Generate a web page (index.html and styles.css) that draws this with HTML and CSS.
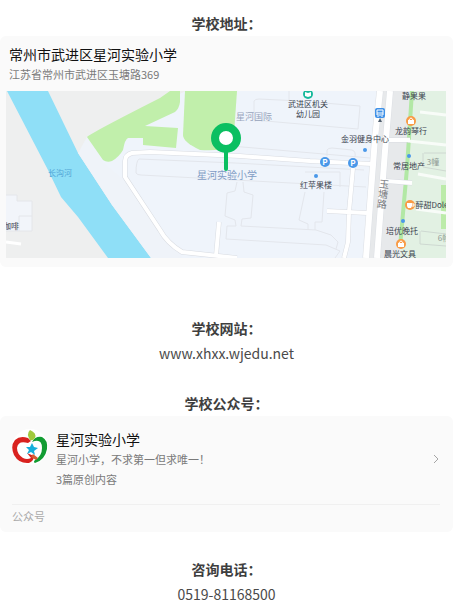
FILE: index.html
```html
<!DOCTYPE html>
<html lang="zh-CN">
<head>
    <meta charset="UTF-8">
    <meta name="viewport" content="width=device-width, initial-scale=1.0">
    <title>常州市武进区星河实验小学</title>
    <link rel="stylesheet" href="styles.css">
</head>
<body>
    <main class="article">
        <section class="address">
            <h2>学校地址：</h2>
            <div class="card location">
                <h3>常州市武进区星河实验小学</h3>
                <p>江苏省常州市武进区玉塘路369</p>
                <svg class="map" viewBox="0 0 440 167" role="img" aria-label="学校地图">
                    <rect width="440" height="167" fill="#eff4fb"/>
                    <!-- west bank and river -->
                    <path d="M0 0H90L80 46L145 167H0Z" fill="#eeefef"/>
                    <path d="M42 0H180L81 46L75 61Z" fill="#eeefef"/>
                    <path d="M1 0H42L72 62L106 114L145 167H102L72 126L55 106L42 79Z" fill="#8fdff7"/>
                    <path d="M72 62L81 46L97 72L119 90L176 167H145L106 114Z" fill="#eff3f9"/>
                    <path d="M0 104H11V110H26V140H0" fill="#f2f5fa" stroke="#e4e6ea"/>
                    <path d="M26 125H13V140" fill="none" stroke="#e4e6ea"/>
                    <path d="M0 151L15 153" stroke="#fff" stroke-width="3"/>
                    <!-- parks -->
                    <path d="M81 46Q83 43 154 7L164 0H174V11Q173 18 169 21L139 35L172 37L170 57L137 54V47H122Q119 48 117 59Q113 66 106 70Q101 72 97 69Z" fill="#c1efab"/>
                    <path d="M179 0H231L227 57Q212 60 194 59Q177 51 177 44Z" fill="#c1efab"/>
                    <!-- buildings -->
                    <g fill="none" stroke="#e3e6ec">
                        <path d="M225 55L364 67M133 68L229 72L358 79M133 68Q130 70 130 82Q131 84 135 84L360 96"/>
                        <path d="M248 29V10Q249 8 253 8L294 10M248 29L352 38L354 15L306 11M283 0V10"/>
                        <path d="M321 65V59Q322 57 326 57L346 59Q350 60 349 66"/>
                        <path d="M231 91L229 100L221 102L219 125L229 129L230 135L221 135L220 148L320 154L334 160L329 167M237 91L238 101L247 104L245 127L236 128L235 135L310 139L325 144L332 151L330 158"/>
                        <path d="M299 101L293 129L302 133V139M318 101L316 131H309V139M299 81H334V96"/>
                    </g>
                    <!-- east side -->
                    <path d="M374 0H406L401 77L394 167H360Z" fill="#e7e9eb"/>
                    <path d="M406 0H440V167H394L401 77Z" fill="#e2f1e3"/>
                    <path d="M435 94H440V138H435Z" fill="#bceba9"/>
                    <path d="M406 0L401 77L394 156" fill="none" stroke="#b2e8a5" stroke-width="4"/>
                    <path d="M418 62H440M417 62V76L440 80M415 140L440 143M414 140V153L440 155" fill="none" stroke="#ced8d1"/>
                    <path d="M414 21L440 24M402 50L440 54M412 83L440 88M410 118L440 122" stroke="#f8fcf8" stroke-width="3"/>
                    <!-- roads, grey casing under white -->
                    <g fill="none" stroke="#d9dce2" stroke-width="5">
                        <path d="M366 73L304 70L234 65L144 61L126 62Q119 64 119 70V86L154 139Q161 152 176 161L231 167"/>
                        <path d="M213 131L210 165M347 77L343 121L342 151L338 167M321 120L361 122M382 49H404M380 90L406 92"/>
                    </g>
                    <path d="M374 0L369 47L360 167M384 0L379 60L371 167" fill="none" stroke="#dcdfe4" stroke-width="7"/>
                    <g fill="none" stroke="#fff" stroke-width="4">
                        <path d="M366 73L304 70L234 65L144 61L126 62Q119 64 119 70V86L154 139Q161 152 176 161L231 167"/>
                        <path d="M213 131L210 165M347 77L343 121L342 151L338 167M321 120L361 122M382 49H404M380 90L406 92"/>
                    </g>
                    <path d="M374 0L369 47L360 167M384 0L379 60L371 167" fill="none" stroke="#fff" stroke-width="6"/>
                    <!-- markers -->
                    <circle cx="302" cy="3" r="5" fill="#16b99b"/>
                    <path d="M299 1L302 2L305 1V5L302 6L299 5Z" fill="#fff"/>
                    <rect x="369" y="17" width="10" height="10" rx="2" fill="#3f91e8"/>
                    <path d="M371 19H377V24H371ZM371 22H377M372 25V26M376 25V26" fill="none" stroke="#fff"/>
                    <path d="M374 27L372 31H376Z" fill="#52606f"/>
                    <g fill="#4a98e9">
                        <circle cx="319" cy="71" r="5"/>
                        <circle cx="347" cy="72" r="5"/>
                        <circle cx="359" cy="59" r="2"/>
                        <circle cx="310" cy="85" r="2"/>
                        <circle cx="403" cy="65" r="2"/>
                        <circle cx="397" cy="130" r="2"/>
                    </g>
                    <g fill="#f99b45">
                        <circle cx="405" cy="30" r="5"/>
                        <circle cx="404" cy="114" r="5"/>
                        <circle cx="395" cy="153" r="5"/>
                    </g>
                    <path d="M402 29H408V33H402ZM392 152H398V156H392ZM401 112H406V115L405 117H402L401 115Z" fill="#fff"/>
                    <path d="M403 29Q405 25 407 29M393 152Q395 148 397 152M406 113H408V115H406" fill="none" stroke="#fff"/>
                    <g class="parking">
                        <text x="319" y="74">P</text>
                        <text x="347" y="75">P</text>
                    </g>
                    <!-- labels -->
                    <g class="place">
                        <text x="302" y="16">武进区机关</text>
                        <text x="302" y="26">幼儿园</text>
                        <text x="359" y="51">金羽健身中心</text>
                        <text x="310" y="97">红苹果楼</text>
                        <text x="408" y="8">静果果</text>
                        <text x="405" y="43">龙韵琴行</text>
                        <text x="403" y="78">常居地产</text>
                        <text x="426" y="117">醉甜Dole</text>
                        <text x="396" y="143">培优晚托</text>
                        <text x="394" y="166">晨光文具</text>
                        <text x="5" y="138">咖啡</text>
                    </g>
                    <g class="building">
                        <text x="427" y="74">3幢</text>
                        <text x="438" y="150">6幢</text>
                    </g>
                    <text class="river" x="54" y="85">长沟河</text>
                    <text class="area" x="248" y="29">星河国际</text>
                    <text class="school" x="221" y="88">星河实验小学</text>
                    <text class="road" transform="translate(377 103) rotate(6)">玉塘路</text>
                    <path d="M220 58V78" stroke="#0bbf61" stroke-width="4" stroke-linecap="round"/>
                    <circle cx="220" cy="47" r="11" fill="#fff" stroke="#0bbf61" stroke-width="8"/>
                </svg>
            </div>
        </section>

        <section class="website">
            <h2>学校网站：</h2>
            <p>www.xhxx.wjedu.net</p>
        </section>

        <section class="account">
            <h2>学校公众号：</h2>
            <div class="card profile">
                <div class="profile-body">
                    <svg class="avatar" viewBox="0 0 36 36" role="img" aria-label="星河实验小学">
                        <circle cx="18" cy="18" r="18" fill="#fff"/>
                        <path d="M16 9Q8 6 3 11Q-2 17 2 26Q7 35 17 34Q22 32 22 27L15 24L19 29Q15 31 11 29Q5 25 5 19Q6 11 16 14L19 12Z" fill="#d9221f"/>
                        <path d="M20 13Q23 7 30 8Q36 11 35 20Q33 31 23 34Q21 33 23 31Q30 27 30 19Q30 9 20 13Z" fill="#129c32"/>
                        <path d="M18 11Q14 5 18 1Q25 4 23 9Q21 12 18 11Z" fill="#a1c93d"/>
                        <path d="M20 14L22 18L26 19L22 22L23 26L19 23L15 25L17 21L14 18L18 18Z" fill="#15afdb"/>
                        <path d="M21 25L26 29L24 31L19 28Z" fill="#d65c31"/>
                    </svg>
                    <div class="profile-text">
                        <h3>星河实验小学</h3>
                        <p>星河小学，不求第一但求唯一！</p>
                        <p>3篇原创内容</p>
                    </div>
                    <svg class="arrow" viewBox="0 0 6 10"><path d="M1 1L5 5L1 9" fill="none" stroke="#a5a5a5"/></svg>
                </div>
                <div class="profile-foot">公众号</div>
            </div>
        </section>

        <section class="phone">
            <h2>咨询电话：</h2>
            <p>0519-81168500</p>
        </section>
    </main>
</body>
</html>
```

FILE: styles.css
```css
body {
    font-family: "Noto Sans CJK SC", sans-serif;
    font-size: 14px;
    line-height: 24px;
    color: #3e3e3e;
    background-color: #fff;
    margin: 0;
}
.article {
    padding: 11px 7px 8px 0;
    text-align: center;
}
h2, h3, p {
    margin: 0;
}
h2 {
    font-size: 14px;
    font-weight: bold;
    margin-bottom: 1px;
}
.card {
    background-color: #fafafa;
    border-radius: 6px;
    text-align: left;
}
.card h3 {
    font-size: 14px;
    font-weight: normal;
    line-height: 20px;
    color: #111;
}
.card p {
    font-size: 11px;
    line-height: 20px;
    color: #7a7a7a;
}
.location {
    padding: 8px 7px 9px 6px;
}
.location h3, .location p {
    padding-left: 3px;
}
.map {
    display: block;
    width: 100%;
    margin-top: 7px;
}
.website {
    margin-top: 49px;
}
.website p, .phone p {
    color: #4a4a4a;
}
.account {
    margin-top: 26px;
}
.phone {
    margin-top: 25px;
}
.profile {
    padding: 13px 13px 5px 12px;
}
.profile-body {
    display: flex;
    align-items: center;
    padding-bottom: 15px;
    border-bottom: 1px solid #f0f0f0;
}
.avatar {
    width: 36px;
    height: 36px;
    align-self: flex-start;
}
.profile-text {
    flex: 1;
    margin-left: 8px;
}
.arrow {
    width: 6px;
    height: 10px;
    margin-right: 1px;
}
.profile-foot {
    font-size: 11px;
    line-height: 22px;
    color: #aaa;
}

/* map labels */
.map text {
    text-anchor: middle;
}
.place {
    font-size: 8px;
    fill: #3a424e;
}
.building {
    font-size: 8px;
    fill: #909a95;
}
.parking {
    font-size: 8px;
    font-weight: bold;
    fill: #fff;
}
.river {
    font-size: 8px;
    fill: #4fa3d5;
}
.area {
    font-size: 9px;
    fill: #98a5bd;
}
.school {
    font-size: 10px;
    fill: #7f9cc4;
}
.road {
    font-size: 10px;
    writing-mode: vertical-rl;
    fill: #77797d;
}
```
